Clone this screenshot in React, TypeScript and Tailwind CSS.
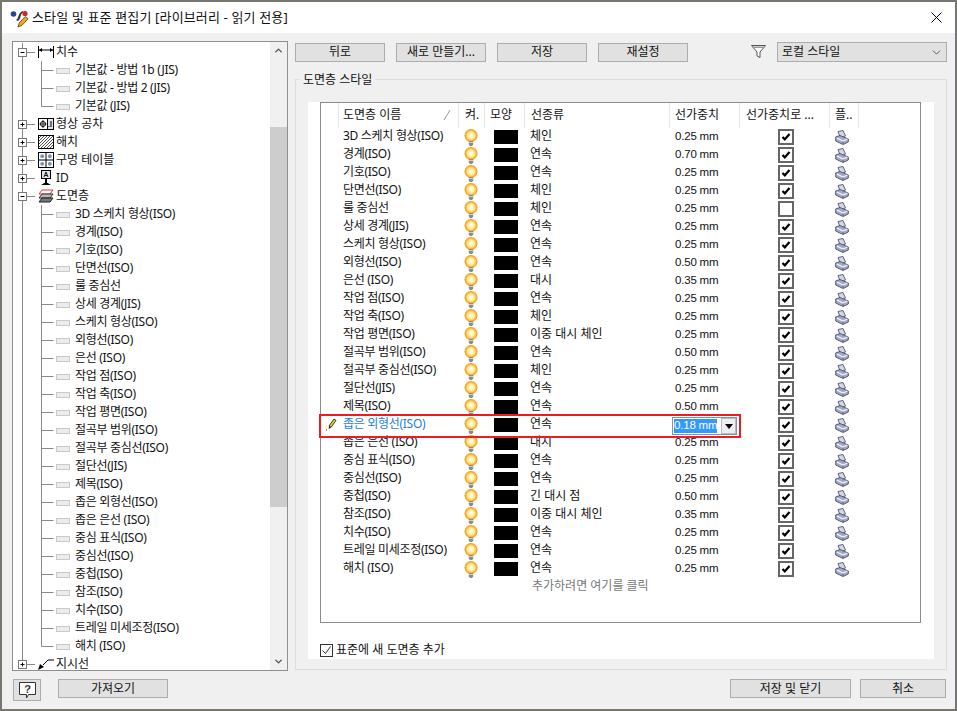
import { ChevronDown, ChevronUp } from 'lucide-react'

type Layer = { name: string; line: string; weight: string; on?: boolean }

const layers: Layer[] = [
  { name: '3D 스케치 형상(ISO)', line: '체인', weight: '0.25 mm' },
  { name: '경계(ISO)', line: '연속', weight: '0.70 mm' },
  { name: '기호(ISO)', line: '연속', weight: '0.25 mm' },
  { name: '단면선(ISO)', line: '체인', weight: '0.25 mm' },
  { name: '룰 중심선', line: '체인', weight: '0.25 mm', on: false },
  { name: '상세 경계(JIS)', line: '연속', weight: '0.25 mm' },
  { name: '스케치 형상(ISO)', line: '연속', weight: '0.25 mm' },
  { name: '외형선(ISO)', line: '연속', weight: '0.50 mm' },
  { name: '은선 (ISO)', line: '대시', weight: '0.35 mm' },
  { name: '작업 점(ISO)', line: '연속', weight: '0.25 mm' },
  { name: '작업 축(ISO)', line: '체인', weight: '0.25 mm' },
  { name: '작업 평면(ISO)', line: '이중 대시 체인', weight: '0.25 mm' },
  { name: '절곡부 범위(ISO)', line: '연속', weight: '0.50 mm' },
  { name: '절곡부 중심선(ISO)', line: '체인', weight: '0.25 mm' },
  { name: '절단선(JIS)', line: '연속', weight: '0.25 mm' },
  { name: '제목(ISO)', line: '연속', weight: '0.50 mm' },
  { name: '좁은 외형선(ISO)', line: '연속', weight: '' },
  { name: '좁은 은선 (ISO)', line: '대시', weight: '0.25 mm' },
  { name: '중심 표식(ISO)', line: '연속', weight: '0.25 mm' },
  { name: '중심선(ISO)', line: '연속', weight: '0.25 mm' },
  { name: '중첩(ISO)', line: '긴 대시 점', weight: '0.50 mm' },
  { name: '참조(ISO)', line: '이중 대시 체인', weight: '0.35 mm' },
  { name: '치수(ISO)', line: '연속', weight: '0.25 mm' },
  { name: '트레일 미세조정(ISO)', line: '연속', weight: '0.25 mm' },
  { name: '해치 (ISO)', line: '연속', weight: '0.25 mm' },
]

const cols = 'grid grid-cols-[17px_120px_26px_40px_145px_70px_90px_30px]'
const latin = "[font-family:'Liberation_Sans',sans-serif]"

const Btn = ({ label, className }: { label: string; className: string }) => (
  <button className={`flex h-[19px] items-center justify-center border border-[#adadad] bg-[#e1e1e1] text-[12px] leading-none text-[#111] ${className}`}>
    {label}
  </button>
)

const Bulb = () => (
  <svg width="14" height="17" viewBox="0 0 14 17">
    <defs>
      <radialGradient id="bulbGlow">
        <stop offset="0" stopColor="#fffff0" />
        <stop offset=".5" stopColor="#fff0a0" />
        <stop offset=".78" stopColor="#ffb83a" />
        <stop offset="1" stopColor="#f59012" />
      </radialGradient>
    </defs>
    <circle cx="7" cy="6.5" r="6.5" fill="url(#bulbGlow)" />
    <path d="M4.800 12h4.400v3.500L8 17H6l-1.200-1.500z" fill="#8a8a8a" />
    <path d="M4.800 13.500h4.400" stroke="#e0e0e0" strokeWidth=".8" />
  </svg>
)

const Printer = () => (
  <svg width="14" height="15" viewBox="0 0 14 15">
    <path d="M3 1.500L8 .5l2.500 5.500-5 2z" fill="#d4d7e6" stroke="#50546f" strokeWidth=".9" />
    <path d="M.7 7L5 5.500l8.300 3.500v3L8 14.500.7 11z" fill="#a4a8c6" stroke="#4a4e6a" strokeWidth=".9" />
    <path d="M1.800 8l6.200 3 4.500-2" fill="none" stroke="#f4f5fb" strokeWidth="1.300" />
    <path d="M8 11.500v2.500" stroke="#4a4e6a" strokeWidth=".8" />
  </svg>
)

const Check = ({ on }: { on: boolean }) => (
  <span className="flex h-4 w-4 items-center justify-center border-2 border-[#666] bg-white">
    {on && (
      <svg width="10" height="10" viewBox="0 0 10 10">
        <path d="M1.500 5l2.300 2.400L8.500 2" fill="none" stroke="#000" strokeWidth="2.300" />
      </svg>
    )}
  </span>
)

const Pencil = () => (
  <svg width="11" height="14" viewBox="0 0 11 14">
    <path d="M3 9l5-7 2 1.400-5 7z" fill="#f2d21e" stroke="#222" strokeWidth=".9" />
    <path d="M3 9l2 1.400-2.400 1.600z" fill="#222" />
    <path d="M0 13h1" stroke="#333" />
  </svg>
)

const LayerRow = ({ layer }: { layer: Layer }) => {
  const isEditing = layer.weight === ''
  return (
    <div className={`${cols} h-[18px] text-[12px] leading-[18px] text-[#111]`}>
      <span className="flex items-center justify-end pr-px">{isEditing && <Pencil />}</span>
      <span className={`whitespace-nowrap pl-[5px] tracking-[-.3px] ${isEditing ? 'text-[#1f7ed6]' : ''}`}>{layer.name}</span>
      <span className="flex h-[18px] items-start justify-center pt-[2px]"><Bulb /></span>
      <span className="flex h-[18px] items-start justify-center pl-[3px] pt-[3px]"><span className="h-[14px] w-6 bg-black" /></span>
      <span className="pl-[6px]">{layer.line}</span>
      <span className={`pl-[6px] text-[11.5px] tracking-[-.2px] ${latin}`}>{layer.weight}</span>
      <span className="flex h-[18px] items-start justify-center pl-[4px] pt-[2px]"><Check on={layer.on !== false} /></span>
      <span className="flex h-[18px] items-start justify-center pr-[4px] pt-[3px]"><Printer /></span>
    </div>
  )
}

const WeightEditor = () => (
  <div className="absolute left-[-2px] top-[311px] h-[24px] w-[422px] border-2 border-[#ed1c24]">
    <div className="absolute left-[351px] top-px flex h-[18px] w-[65px] items-center border border-[#7f93ad] bg-white pl-px leading-none">
      <span className={`flex h-[14px] w-[43px] items-center whitespace-nowrap bg-[#3399ff] text-[11.5px] tracking-[-.2px] text-white ${latin}`}>0.18 mm</span>
      <span className="ml-auto flex h-4 w-[15px] items-center justify-center border border-[#bbb] bg-[#eee]">
        <svg width="8" height="5" viewBox="0 0 8 5"><path d="M0 0h8L4 5z" fill="#000" /></svg>
      </span>
    </div>
  </div>
)

// tree guide lines, one small drawing per row
const RootGuide = ({ open, last }: { open?: boolean; last?: boolean }) => (
  <svg width="24" height="18" viewBox="0 0 24 18" className="shrink-0">
    <path d={`M9.500 0V${last ? 5 : 18}M14 9.500h8`} stroke="#8a8a8a" fill="none" />
    <rect x="5.500" y="5.500" width="8" height="8" fill="#fff" stroke="#777" />
    <path d="M7.500 9.500h4" stroke="#000" />
    {!open && <path d="M9.500 7.500v4" stroke="#000" />}
  </svg>
)

const LeafGuide = ({ last }: { last?: boolean }) => (
  <svg width="62" height="18" viewBox="0 0 62 18" className="shrink-0">
    <path d="M9.500 0V18" stroke="#8a8a8a" fill="none" />
    <path d={`M28.500 0V${last ? 9.500 : 18}M28.500 9.500h12`} stroke="#8a8a8a" fill="none" />
    <rect x="43.500" y="7.500" width="13" height="5" fill="#ececec" stroke="#c8c8c8" />
  </svg>
)

const DimIcon = () => (
  <svg width="16" height="14" viewBox="0 0 16 14">
    <path d="M.5 1v12M15.500 1v12" stroke="#000" />
    <path d="M1 5h14" stroke="#000" />
    <path d="M1 5l3-2v4zM15 5l-3-2v4z" fill="#000" />
  </svg>
)

const ToleranceIcon = () => (
  <svg width="16" height="12" viewBox="0 0 16 12">
    <rect x=".5" y=".5" width="15" height="11" fill="#fff" stroke="#000" />
    <rect x="10" y="1" width="5" height="10" fill="#dfe3ea" />
    <path d="M9.500 1v10" stroke="#000" />
    <circle cx="5" cy="6" r="2.500" fill="none" stroke="#000" />
    <path d="M1.500 6h7M5 2v8" stroke="#000" strokeWidth=".8" />
    <path d="M13 3v6M10.500 8.500h1" stroke="#000" />
  </svg>
)

const HatchIcon = () => (
  <svg width="16" height="14" viewBox="0 0 16 14">
    <rect x=".5" y=".5" width="15" height="13" fill="#fff" stroke="#000" />
    <path d="M1 3l2-2M1 6l5-5M1 9l8-8M1 12L12 1M3 13L15 1M6 13l9-9M9 13l6-6M12 13l3-3" stroke="#222" strokeWidth=".8" />
  </svg>
)

const HoleIcon = () => (
  <svg width="16" height="16" viewBox="0 0 16 16">
    <rect x=".5" y=".5" width="15" height="15" fill="#fff" stroke="#000" />
    <path d="M8 0v16M0 8h16" stroke="#000" />
    <circle cx="4.200" cy="4.200" r="1.900" fill="#6f8fb5" />
    <circle cx="11.800" cy="4.200" r="1.900" fill="#6f8fb5" />
    <circle cx="4.200" cy="11.800" r="1.900" fill="#6f8fb5" />
    <circle cx="11.800" cy="11.800" r="1.900" fill="#6f8fb5" />
  </svg>
)

const IdIcon = () => (
  <svg width="12" height="16" viewBox="0 0 12 16">
    <rect x="1.500" y=".5" width="9" height="8" fill="#dfe3ea" stroke="#000" />
    <path d="M4 7l2-5 2 5M4.800 5.500h2.400" fill="none" stroke="#000" strokeWidth=".9" />
    <path d="M6 9v4" stroke="#000" strokeWidth="2" />
    <path d="M1 15l5-3 5 3z" fill="#000" />
  </svg>
)

const LayerIcon = () => (
  <svg width="16" height="14" viewBox="0 0 16 14">
    <path d="M4 1h11l-3 4H1z" fill="#fff" stroke="#e8343a" />
    <path d="M4 5h11l-3 4H1z" fill="#b8b8b8" stroke="#333" />
    <path d="M4 9h11l-3 4H1z" fill="#777" stroke="#222" />
  </svg>
)

const LeaderIcon = () => (
  <svg width="16" height="12" viewBox="0 0 16 12">
    <path d="M5 7l5-5h6" fill="none" stroke="#000" />
    <path d="M0 12l2-6 4 3z" fill="#000" />
  </svg>
)

const TreeRoot = ({ icon, label, open, last }: { icon: React.ReactNode; label: string; open?: boolean; last?: boolean }) => (
  <div className="flex h-[18px] items-center">
    <RootGuide open={open} last={last} />
    <span className="flex w-[18px] justify-center">{icon}</span>
    <span className="pl-px">{label}</span>
  </div>
)

const TreeLeaf = ({ label, last }: { label: string; last?: boolean }) => (
  <div className="flex h-[18px] items-center">
    <LeafGuide last={last} />
    <span className="whitespace-nowrap tracking-[-.3px]">{label}</span>
  </div>
)

const Tree = () => (
  <div className="relative h-[630px] w-[276px] overflow-hidden border border-[#8f8f8f] bg-white text-[12px] leading-[18px] text-[#111]">
    <div className="pt-px">
      <TreeRoot icon={<DimIcon />} label="치수" open />
      <TreeLeaf label="기본값 - 방법 1b (JIS)" />
      <TreeLeaf label="기본값 - 방법 2 (JIS)" />
      <TreeLeaf label="기본값 (JIS)" last />
      <TreeRoot icon={<ToleranceIcon />} label="형상 공차" />
      <TreeRoot icon={<HatchIcon />} label="해치" />
      <TreeRoot icon={<HoleIcon />} label="구멍 테이블" />
      <TreeRoot icon={<IdIcon />} label="ID" />
      <TreeRoot icon={<LayerIcon />} label="도면층" open />
      {layers.map((l, i) => (
        <TreeLeaf key={l.name} label={l.name} last={i === layers.length - 1} />
      ))}
      <TreeRoot icon={<LeaderIcon />} label="지시선" last />
    </div>
    <div className="absolute bottom-0 right-0 top-0 flex w-[17px] flex-col bg-[#f0f0f0]">
      <span className="flex h-[17px] items-center justify-center"><ChevronUp size={11} strokeWidth={3} color="#505050" /></span>
      <div className="mt-[68px] h-[380px] bg-[#cdcdcd]" />
      <span className="mt-auto flex h-[17px] items-center justify-center"><ChevronDown size={11} strokeWidth={3} color="#505050" /></span>
    </div>
  </div>
)

const HeaderCell = ({ label, className = '' }: { label: string; className?: string }) => (
  <span className={`flex h-[25px] items-center overflow-hidden whitespace-nowrap border-l border-[#e5e5e5] pb-[2px] ${className}`}>{label}</span>
)

const LayerGrid = () => (
  <div className="relative h-[521px] w-[601px] border border-[#8c8c8c] bg-white">
    <div className={`${cols} h-[24px] text-[12px] leading-none text-[#111]`}>
      <span />
      <span className="relative">
        <HeaderCell label="도면층 이름" className="pl-[4px]" />
        <svg width="8" height="10" viewBox="0 0 8 10" className="absolute right-[7px] top-[7px]"><path d="M1 10L7 0" stroke="#999" /></svg>
      </span>
      <HeaderCell label="켜." className="pl-[6px]" />
      <HeaderCell label="모양" className="pl-[5px]" />
      <HeaderCell label="선종류" className="pl-[6px]" />
      <HeaderCell label="선가중치" className="pl-[5px]" />
      <HeaderCell label="선가중치로 ..." className="pl-[6px]" />
      <span className="flex h-[25px] items-center border-l border-r border-[#e5e5e5] pb-[2px] pl-[5px]">플..</span>
    </div>
    {layers.map((l) => (
      <LayerRow key={l.name} layer={l} />
    ))}
    <div className={`${cols} h-[18px] text-[12px] leading-[18px] text-[#777]`}>
      <span className="col-start-5 whitespace-nowrap pl-[8px]">추가하려면 여기를 클릭</span>
    </div>
    <WeightEditor />
  </div>
)

const StylePanel = () => (
  <div className="relative mt-[17px] h-[591px] w-[652px] border border-[#dcdcdc] pb-[10px] pl-3 pr-3 pt-[22px]">
    <span className="absolute left-[4px] top-[-8px] bg-[#f0f0f0] px-[3px] text-[12px] leading-[15px] text-[#111]">도면층 스타일</span>
    <div className="h-[557px] bg-white pl-3">
      <LayerGrid />
      <label className="mt-5 flex items-center gap-[3px] text-[12px] leading-[14px] text-[#111]">
        <span className="flex h-[13px] w-[13px] items-center justify-center border border-[#333] bg-white">
          <svg width="11" height="11" viewBox="0 0 11 11"><path d="M1.500 5.500l3 3 5-7" fill="none" stroke="#333" /></svg>
        </span>
        표준에 새 도면층 추가
      </label>
    </div>
  </div>
)

const Logo = () => (
  <svg width="21" height="20" viewBox="0 0 21 20">
    <circle cx="3.500" cy="6" r="2.800" fill="#23468f" />
    <path d="M6 12c3-1 2-8 7-9v1.500c-3 1-1.500 6-5 8.500z" fill="#333" />
    <circle cx="15" cy="5.500" r="2.600" fill="#d8222a" />
    <path d="M8 19l1.200-4 6-6.500 2.800 2.300-6 6.500z" fill="#f3a71f" stroke="#5c3a10" strokeWidth=".8" />
  </svg>
)

const HelpIcon = () => (
  <svg width="17" height="17" viewBox="0 0 17 17">
    <path d="M.5.5h16v12h-7l-2 3.500v-3.500h-7z" fill="#fff" stroke="#333" />
    <text x="8.500" y="10.500" textAnchor="middle" fontSize="11" fontWeight="700" fill="#333" fontFamily="Liberation Sans">?</text>
  </svg>
)

export default function App() {
  return (
    <div className="flex h-[711px] w-[957px] flex-col border-2 border-[#77776f] bg-[#f0f0f0] [font-family:'Noto_Sans','Noto_Sans_CJK_KR',sans-serif]">
      <div className="flex h-[31px] items-center bg-white pl-[8px] pr-[13px]">
        <Logo />
        <span className="pl-px text-[13px] leading-none tracking-[.15px] text-[#111]">스타일 및 표준 편집기 [라이브러리 - 읽기 전용]</span>
        <svg width="11" height="11" viewBox="0 0 11 11" className="ml-auto"><path d="M.5.5l10 10M10.500.5l-10 10" stroke="#000" /></svg>
      </div>
      <div className="flex gap-[7px] pl-[10px] pt-2">
        <Tree />
        <div className="flex flex-col pt-px">
          <div className="flex items-center">
            <Btn label="뒤로" className="w-[90px]" />
            <Btn label="새로 만들기..." className="ml-[11px] w-[90px]" />
            <Btn label="저장" className="ml-[11px] w-[90px]" />
            <Btn label="재설정" className="ml-[11px] w-[90px]" />
            <svg width="15" height="14" viewBox="0 0 15 14" className="ml-[63px]">
              <path d="M.5.500h14L9 7v5.500L6 11V7z" fill="#fff" stroke="#555" />
              <path d="M1 1.500h13L13 3H2z" fill="#999" />
            </svg>
            <div className="ml-[11px] flex h-5 w-[170px] items-center justify-between border border-[#adadad] bg-[#e1e1e1] pl-[4px] pr-[3px] text-[12px] leading-none text-[#111]">
              로컬 스타일
              <ChevronDown size={13} strokeWidth={1.400} color="#333" />
            </div>
          </div>
          <StylePanel />
        </div>
      </div>
      <div className="flex items-start pl-[11px] pr-[9px] pt-[8px]">
        <button className="flex h-[22px] w-[28px] items-center justify-center border border-[#adadad] bg-[#e1e1e1]">
          <HelpIcon />
        </button>
        <Btn label="가져오기" className="ml-[17px] w-[110px]" />
        <Btn label="저장 및 닫기" className="ml-auto w-[121px]" />
        <Btn label="취소" className="ml-[9px] w-[86px]" />
      </div>
    </div>
  )
}
